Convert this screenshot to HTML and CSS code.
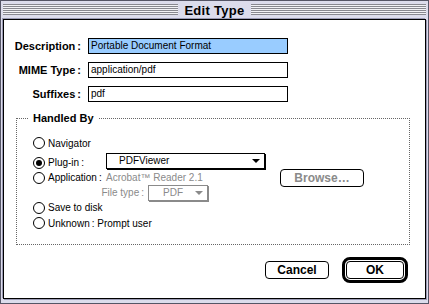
FILE: index.html
```html
<!DOCTYPE html>
<html lang="en">
<head>
  <meta charset="UTF-8" />
  <title>Edit Type</title>
  <link rel="stylesheet" href="styles.css">
</head>
<body>
  <div class="window">
    <div class="titlebar">
      <div class="stripes"></div>
      <span class="title">Edit Type</span>
      <div class="stripes"></div>
    </div>
    <div class="content">
      <div class="fields">
        <div class="field">
          <label>Description<i>:</i></label>
          <div class="input selected">Portable Document Format</div>
        </div>
        <div class="field">
          <label>MIME Type<i>:</i></label>
          <div class="input">application/pdf</div>
        </div>
        <div class="field">
          <label>Suffixes<i>:</i></label>
          <div class="input">pdf</div>
        </div>
      </div>

      <fieldset class="group">
        <legend>Handled By</legend>
        <div class="opt">
          <span class="radio"></span><span class="opt-label">Navigator</span>
        </div>
        <div class="opt row-plugin">
          <span class="radio on"></span><span class="opt-label fixed">Plug-in<i>:</i></span>
          <div class="popup">
            <span>PDFViewer</span>
            <span class="arrow"></span>
          </div>
        </div>
        <div class="opt row-app">
          <span class="radio"></span><span class="opt-label fixed">Application<i>:</i></span>
          <span class="dim">Acrobat™ Reader 2.1</span>
          <button class="btn browse">Browse…</button>
        </div>
        <div class="opt row-filetype">
          <span class="dim ft-label">File type<i>:</i></span>
          <div class="popup small">
            <span>PDF</span>
            <span class="arrow"></span>
          </div>
        </div>
        <div class="opt row-save">
          <span class="radio"></span><span class="opt-label">Save to disk</span>
        </div>
        <div class="opt">
          <span class="radio"></span><span class="opt-label">Unknown<i>:</i> Prompt user</span>
        </div>
      </fieldset>

      <div class="buttons">
        <button class="btn">Cancel</button>
        <div class="default-ring"><button class="btn ok">OK</button></div>
      </div>
    </div>
  </div>
</body>
</html>
```

FILE: styles.css
```css
:root {
  --frame: #dcdcec;
  --frame-edge: #555566;
  --stripe: #888890;
  --dim: #8a8a8a;
  --select: #99ccff;
}
body {
  margin: 0;
  font-family: "Liberation Sans", Arial, sans-serif;
  font-size: 10px;
  color: #000;
}
i {
  font-style: normal;
  margin-left: 2px;
}
.window {
  width: 429px;
  height: 304px;
  box-sizing: border-box;
  border: 1px solid var(--frame-edge);
  background: var(--frame);
  display: flex;
  flex-direction: column;
}
.titlebar {
  height: 18px;
  display: flex;
  align-items: center;
  padding: 0 2px;
}
.stripes {
  flex: 1;
  height: 11px;
  margin-top: -1px;
  background: repeating-linear-gradient(var(--stripe) 0 1px, #f2f2f6 1px 2px);
}
.title {
  font-weight: bold;
  font-size: 13px;
  padding: 0 6px;
  letter-spacing: 0.3px;
}
.content {
  flex: 1;
  margin: 0 2px 4px;
  background: #fff;
  border: 1px solid #000;
  box-shadow: -1px -1px 0 #9a9ab4, 1px 1px 0 #9a9ab4;
}
.fields {
  padding-top: 18px;
  display: flex;
  flex-direction: column;
  gap: 8px;
}
.field {
  display: flex;
  align-items: center;
  height: 16px;
}
.field label {
  width: 77px;
  text-align: right;
  font-weight: bold;
  font-size: 11px;
  margin-right: 7px;
  white-space: nowrap;
}
.input {
  width: 200px;
  height: 16px;
  box-sizing: border-box;
  border: 1px solid #000;
  padding: 0 2px;
  line-height: 14px;
}
.input.selected {
  background: var(--select);
}
.group {
  margin: 10px 0 0 12px;
  width: 394px;
  height: 133px;
  box-sizing: border-box;
  border: 1px dotted #666;
  padding: 11px 0 0 16px;
  min-width: 0;
}
.group legend {
  font-weight: bold;
  font-size: 11px;
  padding: 0 4px;
  margin-left: -4px;
}
.opt {
  display: flex;
  align-items: center;
  height: 16px;
  white-space: nowrap;
}
.row-plugin {
  height: 19px;
}
.row-plugin .radio,
.row-plugin .opt-label {
  margin-top: 4px;
}
.row-app,
.row-filetype,
.row-save {
  height: 15px;
}
.radio {
  width: 12px;
  height: 12px;
  box-sizing: border-box;
  border: 1px solid #000;
  border-radius: 50%;
  margin-right: 3px;
  display: flex;
  align-items: center;
  justify-content: center;
}
.radio.on::after {
  content: "";
  width: 6px;
  height: 6px;
  border-radius: 50%;
  background: #000;
}
.opt-label.fixed {
  width: 58px;
}
.popup {
  width: 159px;
  height: 16px;
  box-sizing: border-box;
  border: 1px solid #000;
  box-shadow: 1px 1px 0 #000;
  display: flex;
  align-items: center;
  justify-content: space-between;
  padding: 0 4px 0 12px;
}
.arrow {
  width: 0;
  height: 0;
  border-left: 4px solid transparent;
  border-right: 4px solid transparent;
  border-top: 4px solid #000;
}
.dim {
  color: var(--dim);
}
.ft-label {
  width: 111px;
  text-align: right;
  margin-right: 4px;
}
.popup.small {
  width: 60px;
  border-color: var(--dim);
  box-shadow: 1px 1px 0 var(--dim);
  color: var(--dim);
  padding: 0 4px 0 14px;
}
.popup.small .arrow {
  border-top-color: var(--dim);
}
.btn {
  font-family: "Liberation Sans", Arial, sans-serif;
  font-weight: bold;
  font-size: 12px;
  background: #fff;
  border: 1px solid #000;
  border-radius: 4px;
  width: 64px;
  height: 18px;
  padding: 0;
  color: #000;
}
.browse {
  width: 84px;
  color: var(--dim);
  margin-left: auto;
  margin-right: 45px;
  flex-shrink: 0;
}
.buttons {
  display: flex;
  justify-content: flex-end;
  align-items: center;
  gap: 13px;
  margin: 12px 17px 0 0;
}
.default-ring {
  border: 3px solid #000;
  border-radius: 8px;
  padding: 1px;
  display: flex;
}
.ok {
  width: 58px;
  height: 18px;
}
```
